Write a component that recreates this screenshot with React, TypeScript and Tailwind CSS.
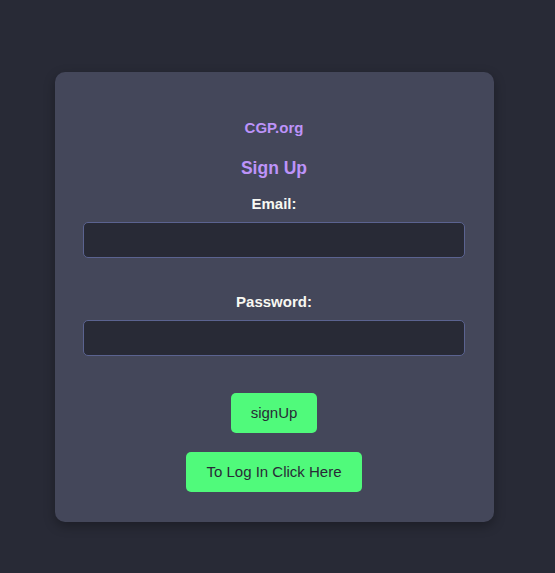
export default function App() {
  return (
    <div
      className="min-h-screen w-full bg-[#282a36] pt-[72px] pb-[51px]"
      style={{ fontFamily: '"Liberation Sans", Arial, sans-serif' }}
    >
      <div className="ml-[55px] flex w-[439px] flex-col items-center rounded-[10px] bg-[#44475a] pl-[28px] pr-[29px] pt-[46px] pb-[30px] shadow-[0_4px_12px_rgba(0,0,0,0.3)]">
        <h4 className="mt-[1px] text-[15px] leading-[18px] font-bold text-[#bd93f9]">CGP.org</h4>
        <h3 className="mt-[21px] text-[17.5px] leading-[21px] font-bold text-[#bd93f9]">Sign Up</h3>

        <label className="mt-[16px] text-[15px] leading-[18px] font-bold text-[#f8f8f2]">Email:</label>
        <input
          type="email"
          className="mt-[9px] h-[36px] w-full rounded-[5px] border border-[#5b6390] bg-[#282a36] px-3 text-[15px] text-[#f8f8f2] outline-none"
        />

        <label className="mt-[35px] text-[15px] leading-[18px] font-bold text-[#f8f8f2]">Password:</label>
        <input
          type="password"
          className="mt-[9px] h-[36px] w-full rounded-[5px] border border-[#5b6390] bg-[#282a36] px-3 text-[15px] text-[#f8f8f2] outline-none"
        />

        <button
          type="button"
          className="mt-[37px] h-[40px] rounded-[5px] bg-[#50fa7b] px-[19.5px] text-[15px] text-[#282a36]"
        >
          signUp
        </button>
        <button
          type="button"
          className="mt-[19px] h-[40px] rounded-[5px] bg-[#50fa7b] px-[20px] text-[15px] text-[#282a36]"
        >
          To Log In Click Here
        </button>
      </div>
    </div>
  )
}
